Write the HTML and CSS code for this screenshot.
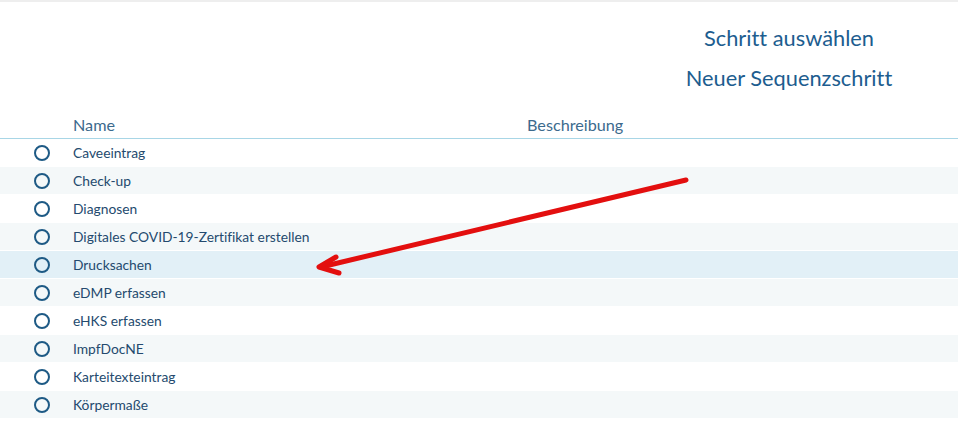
FILE: index.html
```html
<!DOCTYPE html>
<html>
<head>
    <title>Schritt auswählen</title>
    <link rel="stylesheet" href="styles.css">
</head>
<body>
    <div id="page">
        <div class="head">
            <div class="head_titles">
                <div class="head_title">Schritt auswählen</div>
                <div class="head_title">Neuer Sequenzschritt</div>
            </div>
        </div>

        <div class="step_table">
            <div class="step_header">
                <span></span>
                <span>Name</span>
                <span>Beschreibung</span>
            </div>
            <div class="step_row"><span class="radio"></span><span>Caveeintrag</span><span></span></div>
            <div class="step_row"><span class="radio"></span><span>Check-up</span><span></span></div>
            <div class="step_row"><span class="radio"></span><span>Diagnosen</span><span></span></div>
            <div class="step_row"><span class="radio"></span><span>Digitales COVID-19-Zertifikat erstellen</span><span></span></div>
            <div class="step_row hover"><span class="radio"></span><span>Drucksachen</span><span></span></div>
            <div class="step_row"><span class="radio"></span><span>eDMP erfassen</span><span></span></div>
            <div class="step_row"><span class="radio"></span><span>eHKS erfassen</span><span></span></div>
            <div class="step_row"><span class="radio"></span><span>ImpfDocNE</span><span></span></div>
            <div class="step_row"><span class="radio"></span><span>Karteitexteintrag</span><span></span></div>
            <div class="step_row"><span class="radio"></span><span>Körpermaße</span><span></span></div>
        </div>

        <!-- red annotation arrow -->
        <svg class="arrow" width="958" height="429" viewBox="0 0 958 429">
            <g fill="none" stroke="#e30f0f" stroke-width="5" stroke-linecap="round" stroke-linejoin="round">
                <path d="M686 180 L321 267"/>
                <path d="M336 257 L319 267 L339 273"/>
            </g>
        </svg>
    </div>
</body>
</html>
```

FILE: styles.css
```css
/* General body styling */
body {
    margin: 0;
    font-family: 'Lato', 'Open Sans', sans-serif;
    font-variant-ligatures: none;
    background-color: white;
    color: #244a6e;
}

#page {
    position: relative;
    width: 958px;
    height: 429px;
    border-top: 2px solid #eeeeee;
    box-sizing: border-box;
    overflow: hidden;
}

/* Title block on the right */
.head {
    display: flex;
    justify-content: flex-end;
    height: 109px;
}

.head_titles {
    width: 338px;
    padding-top: 16px;
    text-align: center;
}

.head_title {
    font-size: 21.8px;
    line-height: 40px;
    color: #1d5d8f;
}

/* Table */
.step_header,
.step_row {
    display: grid;
    grid-template-columns: 73px 454px 1fr;
    align-items: center;
}

.step_header {
    height: 28px;
    font-size: 16.2px;
    color: #3c6a8d;
    border-bottom: 1px solid #a8d6e6;
    box-sizing: border-box;
}

.step_row {
    height: 28px;
    font-size: 13.8px;
    border-bottom: 1px solid white;
    box-sizing: border-box;
}

.step_row:nth-child(odd) {
    background-color: #f4f8f9;
}

.step_row.hover {
    background-color: #e2f0f7;
}

.radio {
    width: 16px;
    height: 16px;
    margin-left: 34px;
    border: 2px solid #1e5a85;
    border-radius: 50%;
    box-sizing: border-box;
}

.arrow {
    position: absolute;
    left: 0;
    top: -2px;
}
```
